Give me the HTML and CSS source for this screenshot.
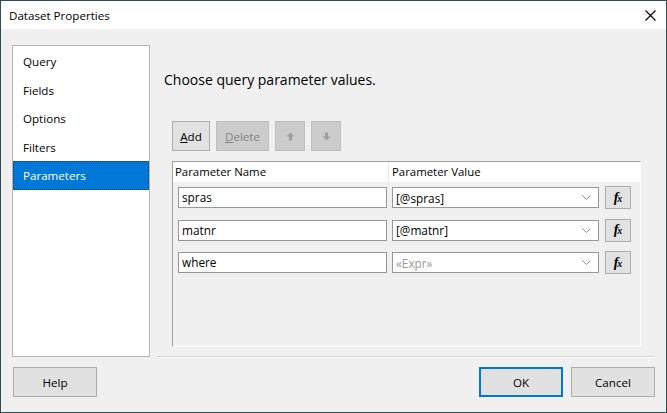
FILE: index.html
```html
<!DOCTYPE html>
<html>
<head>
<meta charset="utf-8">
<link rel="stylesheet" href="styles.css">
</head>
<body>
<div class="window">
  <div class="titlebar">
    <span class="title">Dataset Properties</span>
    <svg class="close" width="11" height="11" viewBox="0 0 11 11"><path d="M0.5 0.5 L10.5 10.5 M10.5 0.5 L0.5 10.5" stroke="#000" stroke-width="1.1" fill="none"/></svg>
  </div>
  <div class="body">
    <div class="main">
      <ul class="nav">
        <li>Query</li>
        <li>Fields</li>
        <li>Options</li>
        <li>Filters</li>
        <li class="selected">Parameters</li>
      </ul>
      <div class="content">
        <h1 class="heading">Choose query parameter values.</h1>
        <div class="toolbar">
          <button class="btn tb-add"><u>A</u>dd</button>
          <button class="btn disabled tb-del"><u>D</u>elete</button>
          <button class="btn disabled tb-arrow"><svg width="9" height="9" viewBox="0 0 9 9"><path d="M4.5 0.5 L8.5 4.5 L6 4.5 L6 8.5 L3 8.5 L3 4.5 L0.5 4.5 Z" fill="#9e9e9e"/></svg></button>
          <button class="btn disabled tb-arrow"><svg width="9" height="9" viewBox="0 0 9 9"><path d="M4.5 8.5 L8.5 4.5 L6 4.5 L6 0.5 L3 0.5 L3 4.5 L0.5 4.5 Z" fill="#9e9e9e"/></svg></button>
        </div>
        <div class="grid">
          <div class="grid-head">
            <div class="col-name">Parameter Name</div>
            <div class="col-value">Parameter Value</div>
          </div>
          <div class="rows">
            <div class="row">
              <div class="textbox">spras</div>
              <div class="combo"><span>[@spras]</span><svg width="9" height="5" viewBox="0 0 9 5"><path d="M0.5 0.5 L4.5 4.5 L8.5 0.5" stroke="#8a8a8a" fill="none"/></svg></div>
              <button class="fx"><i>f</i><i class="x">x</i></button>
            </div>
            <div class="row">
              <div class="textbox">matnr</div>
              <div class="combo"><span>[@matnr]</span><svg width="9" height="5" viewBox="0 0 9 5"><path d="M0.5 0.5 L4.5 4.5 L8.5 0.5" stroke="#8a8a8a" fill="none"/></svg></div>
              <button class="fx"><i>f</i><i class="x">x</i></button>
            </div>
            <div class="row">
              <div class="textbox">where</div>
              <div class="combo"><span class="placeholder">«Expr»</span><svg width="9" height="5" viewBox="0 0 9 5"><path d="M0.5 0.5 L4.5 4.5 L8.5 0.5" stroke="#8a8a8a" fill="none"/></svg></div>
              <button class="fx"><i>f</i><i class="x">x</i></button>
            </div>
          </div>
        </div>
      </div>
    </div>
    <div class="footer">
      <button class="btn dlg">Help</button>
      <div class="spacer"></div>
      <button class="btn dlg default">OK</button>
      <button class="btn dlg">Cancel</button>
    </div>
  </div>
</div>
</body>
</html>
```
FILE: styles.css
```css
* { box-sizing: border-box; }
html, body { margin: 0; padding: 0; }
body {
  width: 667px;
  height: 413px;
  font-family: "Segoe UI", "Open Sans", "Noto Sans", sans-serif;
  font-size: 11.4px;
  color: #000;
  background: #f0f0f0;
}
.window {
  width: 667px;
  height: 413px;
  border: 1px solid #2f4d51;
  display: flex;
  flex-direction: column;
  background: #f0f0f0;
}
.titlebar {
  height: 28px;
  background: #fff;
  display: flex;
  align-items: center;
  justify-content: space-between;
  padding: 0 10px 0 8px;
}
.title { font-size: 11.6px; }
.close { display: block; }
.body {
  flex: 1;
  display: flex;
  flex-direction: column;
  padding: 16px 11px 15px 11px;
}
.main {
  display: flex;
  height: 312px;
}
.nav {
  list-style: none;
  margin: 0;
  padding: 1px 0 0 0;
  width: 138px;
  background: #fff;
  border: 1px solid #b5b5b5;
}
.nav li {
  height: 28.5px;
  line-height: 27px;
  padding-left: 9px;
  border: 1px solid transparent;
  font-size: 11.6px;
}
.nav li.selected {
  background: #0078d7;
  color: #fff;
  border: 1px dotted #1d3d6b;
}
.content {
  flex: 1;
  margin-left: 7px;
  display: flex;
  flex-direction: column;
  border-bottom: 1px solid #d4d4d4;
  box-shadow: 0 1px 0 #fff;
}
.heading {
  margin: 24px 0 0 7px;
  font-size: 14px;
  font-weight: normal;
  line-height: 22px;
}
.toolbar {
  display: flex;
  gap: 6px;
  margin: 30px 0 0 15px;
}
.btn {
  font-family: inherit;
  font-size: 11.6px;
  color: #000;
  background: #e1e1e1;
  border: 1px solid #adadad;
  padding: 0;
  height: 30px;
  display: flex;
  align-items: center;
  justify-content: center;
}
.btn.disabled {
  background: #cccccc;
  border-color: #bfbfbf;
  color: #838383;
}
.tb-add { width: 38px; }
.tb-del { width: 53px; }
.tb-arrow { width: 30px; }
.grid {
  flex: 1;
  margin: 10px 14px 9px 15px;
  border: 1px solid;
  border-color: #a0a0a0 #fcfcfc #fcfcfc #a0a0a0;
  display: flex;
  flex-direction: column;
}
.grid-head {
  display: flex;
  height: 20px;
  background: #fff;
  line-height: 19px;
}
.col-name {
  width: 216px;
  padding-left: 2px;
  border-right: 1px solid #e5e5e5;
}
.col-value {
  flex: 1;
  padding-left: 3px;
}
.rows {
  display: flex;
  flex-direction: column;
  gap: 11.5px;
  padding: 5px 0 0 5px;
}
.row {
  display: flex;
  align-items: center;
  height: 21px;
}
.textbox {
  width: 209px;
  height: 21px;
  background: #fff;
  border: 1px solid #979797;
  padding-left: 3px;
  line-height: 18px;
  font-size: 11.8px;
}
.combo {
  width: 207px;
  height: 21px;
  margin-left: 5px;
  background: #fff;
  border: 1px solid #979797;
  padding: 0 7px 0 3px;
  display: flex;
  align-items: center;
  justify-content: space-between;
  line-height: 18px;
  font-size: 11.8px;
}
.placeholder { color: #9a9a9a; font-style: normal; }
.fx {
  width: 26px;
  height: 23px;
  margin-left: 6px;
  background: #e1e1e1;
  border: 1px solid #adadad;
  padding: 0;
  display: flex;
  align-items: center;
  justify-content: center;
  font-family: "Liberation Serif", "DejaVu Serif", serif;
  font-weight: bold;
  color: #000;
}
.fx i { font-size: 14px; line-height: 14px; }
.fx i.x { font-size: 10px; margin-left: -1px; position: relative; top: 1px; }
.footer {
  display: flex;
  margin-top: 10px;
  gap: 7px;
}
.spacer { flex: 1; }
.btn.dlg {
  width: 84px;
  height: 30px;
  margin-left: 1px;
}
.btn.default {
  border: 1px solid #0078d7;
  box-shadow: inset 0 0 0 1px #0078d7;
}
```
